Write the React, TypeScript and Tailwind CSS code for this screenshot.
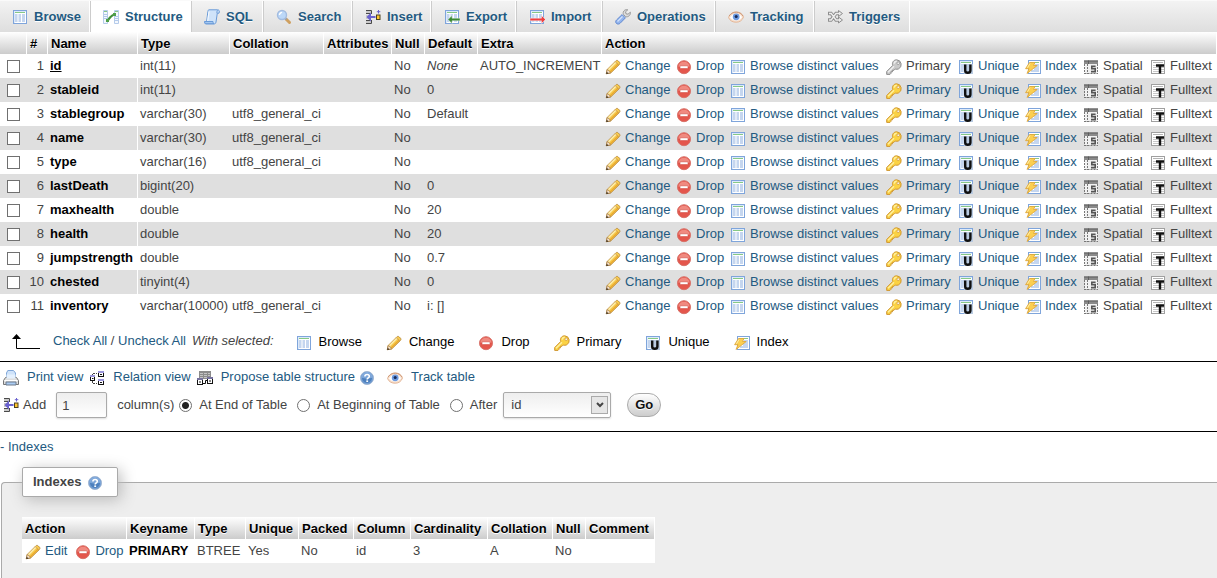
import type { ReactNode } from "react";

type IconProps = { className?: string };

function Svg({ className = "", children }: IconProps & { children: ReactNode }) {
  return (
    <svg
      className={`h-4 w-4 shrink-0 ${className}`}
      viewBox="0 0 16 16"
      fill="none"
      aria-hidden="true"
    >
      {children}
    </svg>
  );
}

/* Small data grid, reused by several icons */
function Sheet() {
  return (
    <>
      <rect x="1.5" y="1.5" width="13" height="13" fill="#fff" stroke="#7fa5db" />
      <path d="M2.5 14V2.5H14" stroke="#dce9fa" />
      <path d="M3 3.5h10" stroke="#86c986" />
      <path
        d="M3 6h2.5M6.5 6H9M10 6h3M3 8h2.5M6.5 8H9M10 8h3M3 10h2.5M6.5 10H9M10 10h3M3 12h2.5M6.5 12H9M10 12h3"
        stroke="#b3c9ea"
        strokeWidth="1.5"
      />
    </>
  );
}

function BrowseIcon({ className }: IconProps) {
  return (
    <Svg className={className}>
      <Sheet />
    </Svg>
  );
}

function StructureIcon() {
  return (
    <Svg>
      <path d="M.5 1.5h4v13h-4zM11.5 1.5h4v13h-4z" fill="#f4f8fd" stroke="#b5cbea" />
      <path d="M1 5.500h3M1 7.500h3M1 9.500h3M12 7.500h3M12 9.500h3M12 11.500h3" stroke="#b3c9ea" />
      <path d="M1 2.500h3M12 2.500h3" stroke="#86c986" />
      <path d="M4.500 11.500c1.500-1 1.500-2 3-3.500s2-2 4-2.500" stroke="#3f8f3a" strokeWidth="2.2" />
      <rect x="3" y="10" width="3" height="3" fill="#4f9f48" />
      <rect x="10" y="4" width="3" height="3" fill="#4f9f48" />
    </Svg>
  );
}

function SqlIcon() {
  return (
    <Svg>
      <path
        d="M5 .8h8.500c1.500 0 2 1 1.800 2.200l-.3 1.200h-1.700L12 13c-.2 1.300-.8 1.900-1.700 1.900H2c-1.200 0-1.700-1-1.400-2.400h2L3.900 2.500C4 1.300 4.400.8 5 .8z"
        fill="#cfe3f9"
        stroke="#6a9bd8"
      />
      <path d="M.8 12.500h8.200c0 1.200.4 2 1 2.200H2c-1 0-1.400-1-1.200-2.200z" fill="#a3c7f0" stroke="#6a9bd8" />
      <path d="M12.900 4.200c0-1.700.2-2.600.9-3.100" stroke="#6a9bd8" />
      <path d="m5 2.500-1.300 9.500" stroke="#f4f9ff" strokeWidth="1.200" />
    </Svg>
  );
}

function SearchIcon() {
  return (
    <Svg>
      <path d="m10 10 3.500 3.500" stroke="#cfa060" strokeWidth="3" strokeLinecap="round" />
      <path d="m9 9 1.500 1.500" stroke="#9aa3ad" strokeWidth="1.800" />
      <circle cx="6" cy="6" r="4.500" fill="#bcd8f8" stroke="#a3bce0" strokeWidth="1.400" />
      <path d="M3.500 6a2.600 2.600 0 0 1 2.600-2.600" stroke="#fff" strokeWidth="1.400" />
    </Svg>
  );
}

function InsertIcon() {
  return (
    <Svg>
      <path d="M1 1h5v3H1zM1 6h3v4H1zM1 12h5v2H1z" fill="#c9c9c9" />
      <path d="M1 1.500h5.500V5M1 14.500h5.500V11M1 4.500h4M1 11.500h4" stroke="#4a4a4a" />
      <path d="M1.500 8 6 3.500V7h4.500v2H6v3.500z" fill="#6a62cf" />
      <rect x="11.500" y="6" width="3.500" height="4.500" fill="#ffc62e" stroke="#4c4020" />
      <path d="M13.500 1v3.500M11.800 2.700h3.500" stroke="#6a62cf" />
    </Svg>
  );
}

function ExportIcon() {
  return (
    <Svg>
      <Sheet />
      <path d="m4 10.500 4-4v2.700h8v2.600H8v2.700z" fill="#3c8a34" stroke="#fff" strokeWidth=".4" />
    </Svg>
  );
}

function ImportIcon() {
  return (
    <Svg>
      <Sheet />
      <path d="m16.500 10.500-4-4v2.700H1v2.600h11.500v2.700z" fill="#f04040" stroke="#fff" strokeWidth=".4" />
    </Svg>
  );
}

function WrenchIcon() {
  return (
    <Svg>
      <path
        d="M15.400 3.200 13 5.200l-2-.4-.5-2L12.800.8C10.600.2 8.600 1.300 8.200 3.500c-.1.800 0 1.400.3 2l2.200 2.200c2.600.6 5-1.500 4.700-4.500z"
        fill="#dcdcdc"
        stroke="#9a9a9a"
      />
      <path
        d="m7.100 5.600 3.300 3.300-5.300 5.400c-1.100 1-2.700 1-3.700.1s-.9-2.500.1-3.400z"
        fill="#93b5ee"
        stroke="#6289cf"
      />
      <path d="m7.500 7.500-5 5" stroke="#d3e2fb" strokeWidth="1.200" />
    </Svg>
  );
}

function EyeIcon({ className }: IconProps) {
  return (
    <Svg className={className}>
      <path d="M.5 8.500C2 4.500 5 3 8.300 3s6 1.700 7.200 5c-1.200 3.500-4 5.200-7.300 5.200S2 12 .5 8.500z" fill="#f7e0ce" stroke="#e3b698" />
      <path d="M2 8.500C3.500 6 5.500 5 8.200 5s4.700 1.200 5.800 3.300c-1.200 2-3.200 3.200-5.800 3.200S3.500 10.500 2 8.500z" fill="#fff" />
      <circle cx="8.200" cy="7.800" r="3.400" fill="#6d9ae0" />
      <circle cx="8.200" cy="7.600" r="1.500" fill="#182b57" />
      <path d="M1 7C3.500 3.800 6 3.200 8.500 3.200S13.500 4.500 15 7" stroke="#cf9978" />
    </Svg>
  );
}

function TriggersIcon() {
  return (
    <Svg>
      <path d="M1 4.500h3L9 11h3M1 11h3l5-6.500h3" stroke="#8e8e8e" strokeWidth="3.400" />
      <path d="m11.500 1.500 4 3-4 3zM11.500 8l4 3-4 3z" fill="#e8e8e8" stroke="#8e8e8e" />
      <path d="M2 4.500h2.200L9 11h3.500M2 11h2.200L9 4.500h3.500" stroke="#eee" strokeWidth="1.400" />
    </Svg>
  );
}

function PencilIcon({ className }: IconProps) {
  return (
    <Svg className={className}>
      <path
        d="m1.300 14.700.9-4.200 8.600-8.600c.7-.7 1.700-.7 2.400 0l1.200 1.200c.7.7.7 1.700 0 2.400l-8.800 8.600z"
        fill="#f8cb4c"
        stroke="#b98a3c"
        strokeWidth=".9"
      />
      <path d="m3.200 11 8-8" stroke="#fdeeb0" strokeWidth="1.500" />
      <path d="m5.200 13 8-8" stroke="#e8a830" strokeWidth="1.200" />
      <path d="m1.300 14.700.8-4c1.500.3 2.800 1.500 3.300 3.300z" fill="#f4dfc6" stroke="#a8804c" strokeWidth=".8" />
      <path d="m1.200 14.900.5-2.200 1.900 1.700z" fill="#3b2f22" />
      <path d="m10.300 2.600 3.300 3.300" stroke="#c99a55" strokeWidth=".9" />
    </Svg>
  );
}

function DropIcon({ className }: IconProps) {
  return (
    <Svg className={className}>
      <circle cx="8" cy="8.200" r="6.500" fill="#e4564c" stroke="#d8736a" />
      <path d="M2.400 7.400a5.700 5.700 0 0 1 11.200 0c-2 1.200-9.200 1.200-11.200 0z" fill="#f08a80" />
      <rect x="4" y="6.800" width="8" height="2.800" rx=".5" fill="#fff" stroke="#cf4a40" strokeWidth=".6" />
    </Svg>
  );
}

function KeyIcon({ className, muted = false }: IconProps & { muted?: boolean }) {
  const line = muted ? "#8d8d8d" : "#cf9632";
  const fill = muted ? "#c9c9c9" : "#fbd243";
  const shine = muted ? "#efefef" : "#fff0a0";
  return (
    <Svg className={className}>
      <path
        d="M10.600.8a4.800 4.800 0 0 1 1.900 9.100c-1.100.5-2.200.5-3.200.1L8 11.300H6.500v1.500H5v1.500l-1 1.100H.7v-2.900l6-6C5.700 3.500 7.700.8 10.600.8z"
        fill={fill}
        stroke={line}
      />
      <path d="m2 13.300 6-6M8 4.700c.3-1.500 1.300-2.300 2.700-2.400" stroke={shine} strokeWidth="1.400" />
      <circle cx="12.200" cy="4.200" r="1.300" fill="#fff" stroke={line} strokeWidth=".8" />
    </Svg>
  );
}

function UniqueIcon({ className }: IconProps) {
  return (
    <Svg className={className}>
      <Sheet />
      <path d="M5 5h10v10H6z" fill="#b9cbe2" />
      <path d="M7.200 5.500v6c0 1.500 1 2.300 2.600 2.300s2.600-.8 2.600-2.300v-6" stroke="#101010" strokeWidth="2.400" />
    </Svg>
  );
}

function IndexIcon({ className }: IconProps) {
  return (
    <Svg className={className}>
      <rect x="3.500" y="1.500" width="12" height="13" fill="#fff" stroke="#7fa5db" />
      <path d="M5 3.500h9" stroke="#86c986" />
      <path d="M10 6h4M9 8h5M9 10h5M6 12h8" stroke="#b3c9ea" strokeWidth="1.500" />
      <path d="M4.500 3.500h5.500L8.500 6.500h3.700L2 14.500l2-4.800H.6z" fill="#fbcf50" stroke="#dfa83e" strokeWidth=".9" />
      <path d="m5 4.500-2.500 4.200" stroke="#fdeeb0" />
    </Svg>
  );
}

function SpatialIcon({ className }: IconProps) {
  return (
    <Svg className={className}>
      <path d="M2 5h12.500v9.500H2z" fill="#f1f1f1" />
      <path d="M1 1.500h14v3.500H1z" fill="#8a8a8a" />
      <path d="M1 2h14M5.500 1.500V5" stroke="#5e5e5e" />
      <path d="M1.500 5v10M4.500 5v10M1.500 14.500h13M14.500 5v10" stroke="#777" strokeDasharray="2 1" />
      <path d="M12.600 7.200H8.800v2.400h3.400v3H8" stroke="#555" strokeWidth="1.600" />
    </Svg>
  );
}

function FulltextIcon({ className }: IconProps) {
  return (
    <Svg className={className}>
      <rect x="1.500" y="1.500" width="13" height="13" fill="#fff" stroke="#a0a0a0" />
      <path d="M3 3.500h10" stroke="#b5b5b5" />
      <path d="M3 6.500h11M3 8.500h11M3 10.500h11M3 12.500h11" stroke="#c8c8c8" />
      <path d="M6 6.500h8M10 6.500v8" stroke="#111" strokeWidth="2.400" />
    </Svg>
  );
}

function PrintIcon() {
  return (
    <Svg className="mt-0.5">
      <path d="M3.500 8V3l1.300-2.500h5.700L12.500 3v5" fill="#cfe3fa" stroke="#7fa6d8" />
      <path d="M2.500 7.500h11l2 3v4h-15v-4z" fill="#dedede" stroke="#757575" />
      <path d="M3.500 4.500h9v4h-9z" fill="#e4f0fd" />
      <path d="M1.500 10.500h13" stroke="#fff" />
      <path d="M3 12h10v3H3z" fill="#a9cbf2" stroke="#6c7a8c" />
    </Svg>
  );
}

function RelationIcon() {
  return (
    <Svg className="mt-0.5">
      <path d="M3.500 6V3.500H8M3.500 11v2.500H8" stroke="#444" strokeDasharray="2 1" />
      <rect x="1.500" y="6.500" width="4" height="4" fill="#fff" stroke="#111" />
      <rect x="9.500" y="2.500" width="5" height="4" fill="#fff" stroke="#111" />
      <rect x="9.500" y="10.500" width="5" height="4" fill="#fff" stroke="#111" />
      <path d="M1 5h5v2H1zM9 1h6v2H9zM9 9h6v2H9z" fill="#9b96dc" />
      <path d="M3 8.500h1.500M11 4.500h2M11 12.500h2" stroke="#111" />
    </Svg>
  );
}

function ProposeIcon() {
  return (
    <Svg className="mt-0.5">
      <path d="M2 1h12v8H2z" fill="#8c8c8c" />
      <path d="M3 3.500h3M7 3.500h3M11 3.500h2M3 5.500h3M7 5.500h3M11 5.500h2M3 7.500h3M7 7.500h3" stroke="#c4c4c4" />
      <rect x=".5" y="9.500" width="5" height="5" fill="#fff" stroke="#111" />
      <rect x="10.500" y="8.500" width="5" height="5" fill="#fff" stroke="#111" />
      <path d="M0 8h6v2H0zM10 7h6v2h-6z" fill="#77739f" />
      <path d="M6 13.500h2.500v-3H10M2 12h2M12 11h2" stroke="#111" />
    </Svg>
  );
}

function HelpIcon({ className }: IconProps) {
  return (
    <Svg className={className}>
      <circle cx="8" cy="8" r="6.500" fill="#4d80be" stroke="#a3b8d4" />
      <path d="M2.500 7.500a5.500 5.500 0 0 1 11 0c-3 1.500-8 1.500-11 0z" fill="#7ca5d8" />
      <circle cx="8" cy="8" r="5.500" stroke="#8fb4e2" strokeWidth=".7" />
      <path d="M5.900 6.500c0-1.300.9-2 2.200-2s2.200.7 2.200 1.900c0 1.500-2.100 1.500-2.100 3" stroke="#fff" strokeWidth="1.600" />
      <path d="M7.300 10.400h1.800V12H7.300z" fill="#fff" />
    </Svg>
  );
}

const tabs = [
  { label: "Browse", icon: <BrowseIcon />, width: "w-[90px]" },
  { label: "Structure", icon: <StructureIcon />, width: "w-[101px]", active: true },
  { label: "SQL", icon: <SqlIcon />, width: "w-[72px]" },
  { label: "Search", icon: <SearchIcon />, width: "w-[89px]" },
  { label: "Insert", icon: <InsertIcon />, width: "w-[79px]" },
  { label: "Export", icon: <ExportIcon />, width: "w-[85px]" },
  { label: "Import", icon: <ImportIcon />, width: "w-[86px]" },
  { label: "Operations", icon: <WrenchIcon />, width: "w-[113px]" },
  { label: "Tracking", icon: <EyeIcon />, width: "w-[99px]" },
  { label: "Triggers", icon: <TriggersIcon />, width: "w-[96px]" },
];

type Column = {
  name: string;
  type: string;
  collation?: string;
  def?: string;
  extra?: string;
  primary?: boolean;
};

const columns: Column[] = [
  { name: "id", type: "int(11)", def: "None", extra: "AUTO_INCREMENT", primary: true },
  { name: "stableid", type: "int(11)", def: "0" },
  { name: "stablegroup", type: "varchar(30)", collation: "utf8_general_ci", def: "Default" },
  { name: "name", type: "varchar(30)", collation: "utf8_general_ci" },
  { name: "type", type: "varchar(16)", collation: "utf8_general_ci" },
  { name: "lastDeath", type: "bigint(20)", def: "0" },
  { name: "maxhealth", type: "double", def: "20" },
  { name: "health", type: "double", def: "20" },
  { name: "jumpstrength", type: "double", def: "0.7" },
  { name: "chested", type: "tinyint(4)", def: "0" },
  { name: "inventory", type: "varchar(10000)", collation: "utf8_general_ci", def: "i: []" },
];

const bulkActions = [
  { label: "Browse", icon: <BrowseIcon className="mt-0.5" /> },
  { label: "Change", icon: <PencilIcon className="mt-0.5" /> },
  { label: "Drop", icon: <DropIcon className="mt-0.5" /> },
  { label: "Primary", icon: <KeyIcon className="mt-0.5" /> },
  { label: "Unique", icon: <UniqueIcon className="mt-0.5" /> },
  { label: "Index", icon: <IndexIcon className="mt-0.5" /> },
];

const headCell =
  "h-[22px] border-r border-white bg-linear-to-b from-white to-[#ccc] p-0 pt-0.5 pl-[3px] text-left font-bold whitespace-nowrap text-black [text-shadow:0_1px_0_#fff]";
const cell = "h-6 p-0 pl-0.5 whitespace-nowrap";

function ActionCell({ icon, label, disabled }: { icon: ReactNode; label: string; disabled?: boolean }) {
  return (
    <td className="h-6 p-0 pl-[3px] whitespace-nowrap">
      {disabled ? (
        <span className="flex items-center gap-1">
          {icon}
          {label}
        </span>
      ) : (
        <a href="#" className="flex items-center gap-1 text-[#235a81]">
          {icon}
          {label}
        </a>
      )}
    </td>
  );
}

function TabBar() {
  return (
    <nav className="flex h-8 border-t border-[#fafafa] bg-linear-to-b from-[#f3f3f3] to-[#dedede]">
      {tabs.map((tab, i) => (
        <a
          key={tab.label}
          href="#"
          className={`flex items-center gap-1.5 border-r border-r-white pl-3 font-bold text-[#235a81] [text-shadow:0_1px_0_#fff] ${
            tab.width
          } ${i > 0 ? "border-l border-l-[#ccc]" : ""} ${tab.active ? "bg-white" : ""}`}
        >
          {tab.icon}
          {tab.label}
        </a>
      ))}
    </nav>
  );
}

function StructureTable() {
  return (
    <table className="w-full table-fixed border-separate border-spacing-0">
      <colgroup>
        <col className="w-[27px]" />
        <col className="w-[21px]" />
        <col className="w-[90px]" />
        <col className="w-[92px]" />
        <col className="w-[94px]" />
        <col className="w-[68px]" />
        <col className="w-[33px]" />
        <col className="w-[53px]" />
        <col className="w-[124px]" />
        <col className="w-[71px]" />
        <col className="w-[54px]" />
        <col className="w-[156px]" />
        <col className="w-[72px]" />
        <col className="w-[67px]" />
        <col className="w-[58px]" />
        <col className="w-[67px]" />
        <col />
      </colgroup>
      <thead>
        <tr>
          <th className={headCell} />
          <th className={headCell}>#</th>
          <th className={headCell}>Name</th>
          <th className={headCell}>Type</th>
          <th className={headCell}>Collation</th>
          <th className={headCell}>Attributes</th>
          <th className={headCell}>Null</th>
          <th className={headCell}>Default</th>
          <th className={headCell}>Extra</th>
          <th className={headCell} colSpan={8}>
            Action
          </th>
        </tr>
      </thead>
      <tbody>
        {columns.map((col, i) => (
          <tr key={col.name} className="even:bg-[#dfdfdf]">
            <td className="h-6 p-0 pl-[7px]">
              <input
                type="checkbox"
                id={`col-${col.name}`}
                className="block h-[13px] w-[13px] appearance-none border border-[#707070] bg-white"
              />
            </td>
            <td className="h-6 p-0 pr-1 text-right">{i + 1}</td>
            <th className="h-6 border-r border-white p-0 pl-0.5 text-left font-bold text-black">
              <label htmlFor={`col-${col.name}`} className={col.primary ? "underline" : ""}>
                {col.name}
              </label>
            </th>
            <td className={cell}>{col.type}</td>
            <td className={cell}>{col.collation}</td>
            <td className={cell} />
            <td className={cell}>No</td>
            <td className={cell}>{col.def === "None" ? <i>None</i> : col.def}</td>
            <td className={cell}>{col.extra}</td>
            <ActionCell icon={<PencilIcon className="mt-0.5" />} label="Change" />
            <ActionCell icon={<DropIcon className="mt-0.5" />} label="Drop" />
            <ActionCell icon={<BrowseIcon className="mt-0.5" />} label="Browse distinct values" />
            <ActionCell
              icon={<KeyIcon className="mt-0.5" muted={col.primary} />}
              label="Primary"
              disabled={col.primary}
            />
            <ActionCell icon={<UniqueIcon className="mt-0.5" />} label="Unique" />
            <ActionCell icon={<IndexIcon className="mt-0.5" />} label="Index" />
            <ActionCell icon={<SpatialIcon className="mt-0.5" />} label="Spatial" disabled />
            <ActionCell icon={<FulltextIcon className="mt-0.5" />} label="Fulltext" disabled />
          </tr>
        ))}
      </tbody>
    </table>
  );
}

function BulkBar() {
  return (
    <div className="flex h-[43px] items-center pt-1 pl-3">
      <svg className="h-4 w-7 shrink-0" viewBox="0 0 28 16" fill="none" aria-hidden="true">
        <path d="M4.5 2v12.5H28" stroke="#000" />
        <path d="M4.5 0 9 5H0z" fill="#000" />
      </svg>
      <div className="ml-[13px] flex gap-1.5 pb-0.5 whitespace-nowrap">
        <span>
          <a href="#" className="text-[#235a81]">Check All</a> /{" "}
          <a href="#" className="text-[#235a81]">Uncheck All</a>
        </span>
        <i>With selected:</i>
      </div>
      <div className="ml-[22px] flex gap-6">
        {bulkActions.map((action) => (
          <button key={action.label} type="button" className="flex items-center gap-[7px] text-black">
            {action.icon}
            {action.label}
          </button>
        ))}
      </div>
    </div>
  );
}

const radio =
  "mr-[7px] h-[13px] w-[13px] appearance-none rounded-full border border-[#707070] bg-white checked:bg-[radial-gradient(circle,#222_0_3px,#fff_4px)]";

function ToolLinks() {
  return (
    <div className="flex h-[30px] items-center gap-1.5 pl-[3px] whitespace-nowrap text-[#235a81]">
      <a href="#" className="flex items-center gap-2">
        <PrintIcon />
        Print view
      </a>
      <a href="#" className="flex items-center gap-2">
        <RelationIcon />
        Relation view
      </a>
      <div className="flex items-center gap-1">
        <a href="#" className="flex items-center gap-2">
          <ProposeIcon />
          Propose table structure
        </a>
        <a href="#" aria-label="Documentation">
          <HelpIcon className="mt-0.5" />
        </a>
      </div>
      <a href="#" className="ml-1.5 flex items-center gap-2">
        <EyeIcon className="mt-0.5" />
        Track table
      </a>
    </div>
  );
}

function AddColumns() {
  return (
    <form className="flex h-[39px] items-center pb-[13px] pl-[3px] whitespace-nowrap">
      <label htmlFor="num" className="flex items-center gap-1">
        <InsertIcon />
        Add
      </label>
      <input
        id="num"
        defaultValue="1"
        className="ml-2.5 h-[26px] w-[51px] rounded-xs border border-[#aaa] bg-linear-to-b from-[#eee] to-white px-[5px] text-[#444] shadow-[0_1px_2px_#ddd]"
      />
      <span className="ml-2.5">column(s)</span>
      <label className="ml-[5px] flex items-center">
        <input type="radio" name="where" defaultChecked className={radio} />
        At End of Table
      </label>
      <label className="ml-2.5 flex items-center">
        <input type="radio" name="where" className={radio} />
        At Beginning of Table
      </label>
      <label className="ml-2.5 flex items-center">
        <input type="radio" name="where" className={radio} />
        After
      </label>
      <div className="relative ml-1.5">
        <select
          aria-label="After column"
          className="block h-[26px] w-[108px] appearance-none rounded-xs border border-[#aaa] bg-linear-to-b from-[#eee] to-white pl-[7px] text-[#444] shadow-[0_1px_2px_#ddd]"
        >
          {columns.map((col) => (
            <option key={col.name}>{col.name}</option>
          ))}
        </select>
        <span className="pointer-events-none absolute top-1 right-[3px] flex h-[18px] w-[17px] items-center justify-center border border-[#aaa] bg-[#e6e6e6]">
          <svg className="h-2 w-2" viewBox="0 0 8 8" fill="none" aria-hidden="true">
            <path d="m1 2 3 3 3-3" stroke="#444" strokeWidth="2" />
          </svg>
        </span>
      </div>
      <button
        type="button"
        className="ml-4 h-6 w-[34px] rounded-full border border-[#aaa] bg-linear-to-b from-white to-[#ccc] font-bold text-[#111] [text-shadow:0_1px_0_#fff]"
      >
        Go
      </button>
    </form>
  );
}

function IndexesPanel() {
  return (
    <fieldset className="ml-px grow rounded-tl border-t border-l border-[#aaa] bg-[#eee] pb-4 pl-5">
      <legend className="flex h-[30px] items-center gap-1.5 rounded-xs border border-[#aaa] bg-white pr-3.5 pl-2.5 font-bold text-[#444] shadow-[3px_3px_15px_#bbb]">
        Indexes
        <a href="#" aria-label="Documentation">
          <HelpIcon className="mt-0.5" />
        </a>
      </legend>
      <table className="mt-5 table-fixed border-separate border-spacing-0 bg-white">
        <thead>
          <tr>
            <th className={`${headCell} w-[105px]`}>Action</th>
            <th className={`${headCell} w-[68px]`}>Keyname</th>
            <th className={`${headCell} w-[51px]`}>Type</th>
            <th className={`${headCell} w-[53px]`}>Unique</th>
            <th className={`${headCell} w-[55px]`}>Packed</th>
            <th className={`${headCell} w-[57px]`}>Column</th>
            <th className={`${headCell} w-[77px]`}>Cardinality</th>
            <th className={`${headCell} w-[65px]`}>Collation</th>
            <th className={`${headCell} w-[33px]`}>Null</th>
            <th className={`${headCell} w-[69px]`}>Comment</th>
          </tr>
        </thead>
        <tbody>
          <tr>
            <td className="h-6 p-0 pl-[3px]">
              <div className="flex gap-2 text-[#235a81]">
                <a href="#" className="flex items-center gap-1">
                  <PencilIcon className="mt-0.5" />
                  Edit
                </a>
                <a href="#" className="flex items-center gap-1">
                  <DropIcon className="mt-0.5" />
                  Drop
                </a>
              </div>
            </td>
            <th className="h-6 p-0 pl-0.5 text-left font-bold text-black">PRIMARY</th>
            <td className={cell}>BTREE</td>
            <td className={cell}>Yes</td>
            <td className={cell}>No</td>
            <td className={cell}>id</td>
            <td className={cell}>3</td>
            <td className={cell}>A</td>
            <td className={cell}>No</td>
            <td className={cell} />
          </tr>
        </tbody>
      </table>
    </fieldset>
  );
}

export default function App() {
  return (
    <div className="flex min-h-screen flex-col overflow-x-hidden bg-white font-['Liberation_Sans',Arial,sans-serif] text-[13px] leading-4 text-[#444]">
      <TabBar />
      <StructureTable />
      <BulkBar />
      <hr className="border-black" />
      <ToolLinks />
      <AddColumns />
      <hr className="border-black" />
      <div className="flex h-[35px] items-center pb-1.5">
        <a href="#" className="text-[#235a81]">- Indexes</a>
      </div>
      <IndexesPanel />
    </div>
  );
}
